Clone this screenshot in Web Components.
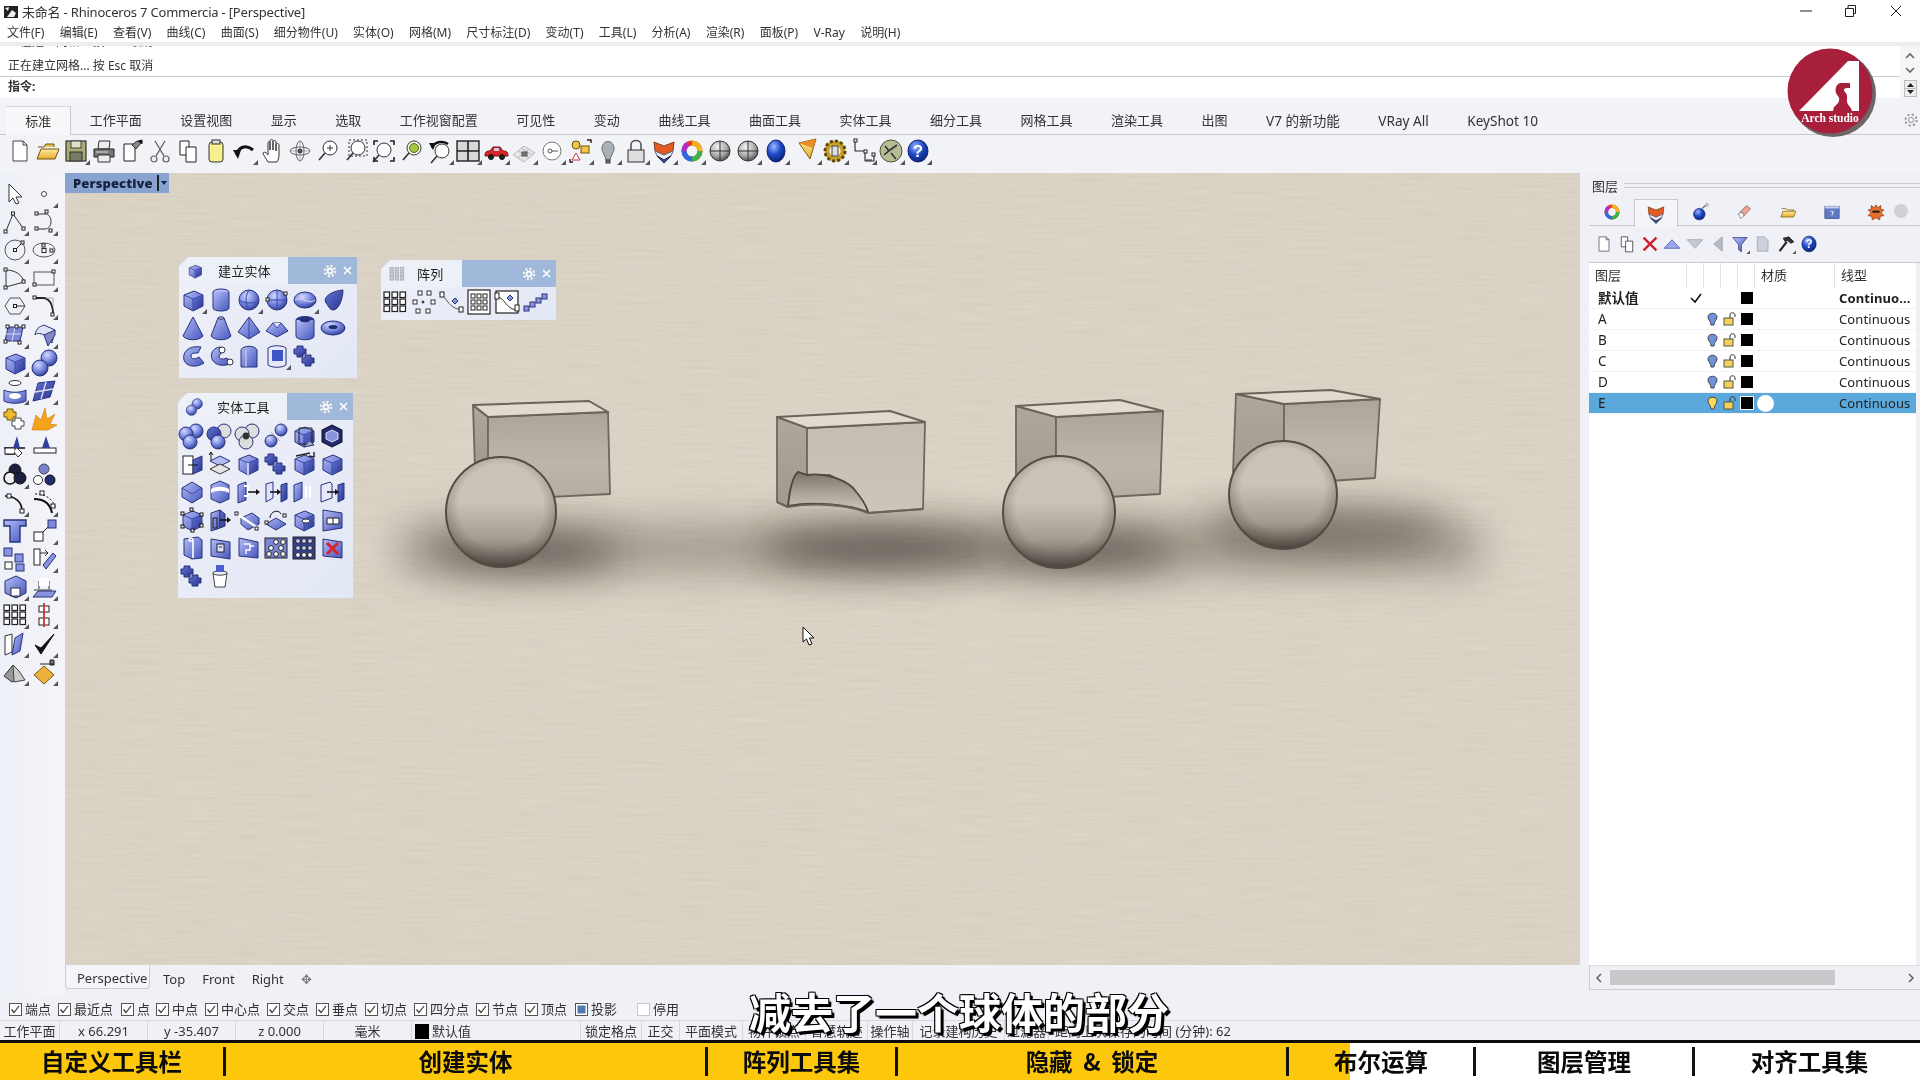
<!DOCTYPE html>
<html lang="zh">
<head>
<meta charset="utf-8">
<title>Rhinoceros 7</title>
<style>
  html, body { margin: 0; padding: 0; background: #f0f1f6; }
  body { font-family: "Noto Sans", "Noto Sans CJK SC", sans-serif; overflow: hidden; }
</style>
</head>
<body>
<rh-app></rh-app>
<script>
// shared gradients for the little toolbar icons
const DEFS = `<defs>
<linearGradient id="b" x1="0" y1="0" x2="1" y2="1"><stop offset="0" stop-color="#b4bdf7"/><stop offset="1" stop-color="#4656bd"/></linearGradient>
<linearGradient id="d" x1="0" y1="0" x2="1" y2="1"><stop offset="0" stop-color="#6675d6"/><stop offset="1" stop-color="#27338c"/></linearGradient>
<radialGradient id="s" cx=".38" cy=".3" r=".75"><stop offset="0" stop-color="#d5daff"/><stop offset=".55" stop-color="#7585de"/><stop offset="1" stop-color="#2c388f"/></radialGradient>
<radialGradient id="g" cx=".4" cy=".3" r=".75"><stop offset="0" stop-color="#f4f4f4"/><stop offset=".6" stop-color="#a9a9a9"/><stop offset="1" stop-color="#444"/></radialGradient>
<radialGradient id="u" cx=".38" cy=".3" r=".75"><stop offset="0" stop-color="#9db8ff"/><stop offset=".5" stop-color="#1f49c8"/><stop offset="1" stop-color="#0c1f6e"/></radialGradient>
<linearGradient id="y" x1="0" y1="0" x2="0" y2="1"><stop offset="0" stop-color="#ffe9a0"/><stop offset="1" stop-color="#e8ad2c"/></linearGradient>
</defs>`;

const P = (d, fill = "none", stroke = "#333", w = 1) => `<path d="${d}" fill="${fill}" stroke="${stroke}" stroke-width="${w}"/>`;
const C = (x, y, r, fill = "none", stroke = "#333", w = 1) => `<circle cx="${x}" cy="${y}" r="${r}" fill="${fill}" stroke="${stroke}" stroke-width="${w}"/>`;
const E = (x, y, rx, ry, fill = "none", stroke = "#333", w = 1) => `<ellipse cx="${x}" cy="${y}" rx="${rx}" ry="${ry}" fill="${fill}" stroke="${stroke}" stroke-width="${w}"/>`;
const R = (x, y, w, h, fill = "#fff", stroke = "#222", sw = 1) => `<rect x="${x}" y="${y}" width="${w}" height="${h}" fill="${fill}" stroke="${stroke}" stroke-width="${sw}"/>`;
const NAVY = "#27327a";

const cube = P("M5 9L15 5L24 9V20L14 25L5 20Z", "url(#b)", NAVY) + P("M14 13L24 9V20L14 25Z", "url(#d)", "none", 0) + P("M5 9L14 13L24 9M14 13V25", "none", "#3b49a8");
const sph = (x = 14, y = 14, r = 10) => C(x, y, r, "url(#s)", NAVY);
const mag = (x = 16, y = 11) => C(x, y, 7, "#fff", "#333") + P(`M${x - 5} ${y + 5}L${x - 11} ${y + 12}`, "none", "#333", 1.6);
const puzzle = P("M6 4h6v3h3v5h-3v3h-6v-3h-3v-5h3z", "url(#d)", NAVY) + P("M14 13h6v3h3v5h-3v3h-6v-3h-3v-5h3z", "url(#d)", NAVY);
const bools = a => C(18, 9, 7, a[0], NAVY) + C(8, 12, 7, a[1], NAVY) + C(12, 20, 7, a[2], NAVY);
const arrow = (x, y, l = 10) => P(`M${x} ${y}h${l}`, "none", "#111", 1.3) + P(`M${x + l} ${y - 3}l4 3l-4 3z`, "#111", "none", 0);

const ICONS = {
  // top toolbar
  new: P("M7 4H17L21 8V24H7Z", "#fff", "#444") + P("M17 4V8H21", "none", "#444"),
  open: P("M4 10h6l2-3h8v3", "#e9c24e", "#6b5410") + P("M3 22L7 12H25L21 22Z", "url(#y)", "#6b5410"),
  save: R(4, 4, 20, 20, "#a9ad72", "#333", 1.2) + R(9, 4, 10, 7, "#dfe0c8", "#444") + R(8, 15, 12, 9, "#777b66", "#333"),
  print: P("M9 4H20L19 12H8Z", "#eee", "#333") + P("M4 12H24V20H4Z", "#777", "#222") + P("M8 18H20V25H8Z", "#eee", "#333") + P("M6 15h12", "none", "#ddd"),
  docs: P("M6 7H17V24H6Z", "#fff", "#222") + P("M14 8l5-4l4 2l-5 6z", "#888", "#333") + P("M20 4l4 -1v4", "#111", "#111"),
  cut: P("M9 4L18 19M19 4L10 19", "none", "#555", 1.2) + C(8, 22, 3, "#eee", "#666", 1.2) + C(20, 22, 3, "#eee", "#666", 1.2),
  copy: P("M6 4H15V18H6Z", "#fff", "#222") + P("M12 10H22V25H12Z", "#fff", "#222"),
  paste: `<rect x="7" y="5" width="14" height="20" rx="3" fill="#f6f08e" stroke="#333"/>` + R(10, 3, 8, 4, "#ddd", "#333"),
  undo: P("M7 18C8 10 16 7 23 13", "none", "#111", 3) + P("M3 13L11 13L8 22Z", "#111", "none", 0),
  hand: P("M10 25C8 21 5 18 5 16C6 14 9 16 10 18V6C10 4 12 4 12 6V13V4C12 2 15 2 15 4V13V5C15 3 18 3 18 5V14V8C18 6 21 6 21 8V18C21 21 20 23 19 25Z", "#fff", "#333"),
  rot: E(14, 14, 10, 4, "none", "#666") + E(14, 14, 4, 10, "none", "#666") + C(14, 14, 2, "#222", "#222") + P("M4 14h20M14 4v20", "none", "#888", .6),
  zoomi: mag() + P("M13 11h6M16 8v6", "none", "#333"),
  zoomw: mag() + `<rect x="7" y="3" width="18" height="16" fill="none" stroke="#333" stroke-dasharray="2 2"/>`,
  zoome: mag(14, 13) + P("M4 8V4H8M20 4H24V8M4 20V24H8M20 24H24V20", "none", "#222", 1.6),
  zooms: mag() + C(16, 11, 4.5, "#a8c63f", "#4d6a10"),
  zoomu: mag(16, 14) + P("M6 11C8 5 16 3 22 7", "none", "#111", 2.4) + P("M3 6L10 6L7 13Z", "#111", "none", 0),
  grid4: R(3, 4, 22, 20, "#d8d8d8", "#222", 1.4) + P("M14 4V24M3 14H25", "none", "#222", 1.6),
  car: P("M3 18C3 14 6 14 8 14L11 10H18L21 14C25 14 26 15 26 19H3Z", "#d7252a", "#801014") + C(9, 20, 2.5, "#222", "#111") + C(20, 20, 2.5, "#222", "#111") + R(12, 11, 5, 3, "#ccd", "none", 0),
  ghost: P("M3 18L14 9L25 16L14 25Z", "#e6e6e6", "#bbb") + P("M8 14L19 21M11 11L22 18M8 21L19 12", "none", "#bbb") + R(12, 15, 5, 4, "#777", "#555"),
  circ: C(14, 14, 9, "#fff", "#777") + C(12, 14, 2, "#fff", "#555") + P("M14 14h6", "none", "#555"),
  osnap: C(10, 8, 4, "#f4c542", "#6b5410") + R(15, 9, 8, 7, "#f4c542", "#6b5410") + P("M10 16L14 23H6Z", "#fff", "#c33") + P("M4 22V25H7M21 3H25V6", "none", "#222", 1.4),
  bulb: P("M8 12C8 2 20 2 20 12C20 16 17 17 16 23H12C11 17 8 16 8 12Z", "#aab0b8", "#666") + R(12, 23, 4, 3, "#666", "#444"),
  lock: P("M9 13V8C9 2 19 2 19 8V13", "none", "#555", 1.6) + R(6, 13, 16, 12, "#ddd", "#333"),
  shield: P("M4 5L14 9L24 5L23 14L14 18L5 14Z", "#e65a24", "#742") + P("M5 14L14 18L23 14L21 19L14 23L7 19Z", "#e8e8ef", "#668") + P("M7 19L14 23L21 19L14 26Z", "#3a58b0", "#224"),
  wheel: `<circle cx="14" cy="14" r="8" fill="none" stroke="#e33" stroke-width="5"/><path d="M14 6A8 8 0 0 1 22 14" fill="none" stroke="#f5b21b" stroke-width="5"/><path d="M22 14A8 8 0 0 1 14 22" fill="none" stroke="#3ab34a" stroke-width="5"/><path d="M14 22A8 8 0 0 1 6 14" fill="none" stroke="#2e6be0" stroke-width="5"/><path d="M6 14A8 8 0 0 1 10 7" fill="none" stroke="#b02ec0" stroke-width="5"/>`,
  sphg: C(14, 14, 10, "url(#g)", "#333") + P("M4 14H24M14 4V24", "none", "#333"),
  blue: E(14, 14, 9, 11, "url(#u)", "#12246e"),
  cone: P("M5 6L22 2L16 22Z", "url(#y)", "#7a5a10") + P("M5 6L22 2L19 11Z", "#f08a24", "none", 0),
  gear: `<circle cx="14" cy="14" r="8" fill="none" stroke="#c9a227" stroke-width="5"/><circle cx="14" cy="14" r="10" fill="none" stroke="#5c4a12" stroke-width="3" stroke-dasharray="3 2.2"/>` + R(11, 9, 6, 10, "#ddd", "#444"),
  dim: P("M6 4V14M6 14H16V24M16 24H25M25 18V24", "none", "#222", 1.1) + R(5, 2, 3, 3) + R(15, 13, 3, 3) + R(23, 16, 3, 3) + P("M17 23h6", "none", "#222"),
  globe: C(14, 14, 11, "#b6bd94", "#4c5233") + P("M7 18L13 13L20 8M12 14L8 9M14 16L19 22", "none", "#333", 1.6),
  help: E(14, 14, 10, 11, "url(#u)", "#12246e") + `<text x="14" y="20" font-family="Liberation Sans" font-size="17" font-weight="700" fill="#fff" text-anchor="middle">?</text>`,
  // left toolbar
  select: P("M8 4V22L12 18L15 24L18 23L15 17H21Z", "#fff", "#333"),
  point: C(14, 14, 2.5, "#fff", "#444"),
  polyl: P("M5 23L12 6L22 20", "none", "#333") + R(3, 22, 3, 3) + R(10.5, 4, 3, 3) + R(21, 19, 3, 3),
  curve: P("M7 6H15C23 6 23 21 15 21H7", "none", "#333") + R(5, 4, 3, 3) + R(15, 2, 3, 3) + R(5, 19, 3, 3) + R(19, 21, 3, 3),
  circle: C(14, 14, 10, "none", "#555") + P("M14 14L21 7", "none", "#333") + R(12.5, 12.5, 3, 3) + R(20, 5, 3, 3),
  ellipse: E(14, 14, 11, 7, "none", "#555") + R(12, 8, 3, 3) + R(12, 12.5, 4, 4) + R(20, 13, 3, 3),
  arc: P("M5 23V6C15 6 22 12 23 18L5 23", "none", "#333") + R(3, 4, 3, 3) + R(21, 16, 3, 3) + R(3, 22, 3, 3),
  rect: R(4, 8, 20, 13, "none", "#555") + R(3, 19, 3, 3) + R(22, 6, 3, 3),
  poly: P("M4 14L9 6H19L24 14L19 22H9Z", "none", "#555") + P("M14 14H24", "none", "#333") + R(12.5, 12.5, 3, 3),
  fillet: P("M4 6H13C19 6 23 12 23 22", "none", "#222", 1.8) + R(3, 4, 3, 3) + R(21, 21, 3, 3) + P("M16 6H23V14", "none", "#aaa"),
  srfp: P("M7 6L22 6L19 20L4 20Z", "#7c86d8", NAVY) + P("M14 6L11 20M5 13H20", "none", "#dde") + R(5, 4, 3, 3) + R(14, 4, 3, 3) + R(21, 4, 3, 3) + R(3, 19, 3, 3) + R(17, 20, 3, 3),
  srfe: P("M5 14C6 6 12 5 14 4L25 9L22 22L14 14C10 12 6 12 5 14Z", "#dfe2f5", NAVY) + P("M14 14L25 9V14L18 25Z", "#8088c4", NAVY),
  cube,
  spheres: C(19, 9, 8, "url(#s)", NAVY) + C(10, 19, 8, "url(#s)", NAVY),
  meshc: E(14, 6, 6, 2.5, "#fff", "#333") + P("M3 13C8 16 20 16 25 13V24C20 27 8 27 3 24Z", "url(#b)", NAVY) + E(14, 19, 6, 3, "#fff", "none", 0),
  grid: P("M8 6L25 4L20 20L3 24Z", "url(#d)", NAVY) + P("M16 5L11 22M5 15L23 12", "none", "#dde", 1.4),
  gold: P("M6 4h6v3h3v5h-3v3h-6v-3h-3v-5h3z", "#f0b92e", "#6b5410") + P("M14 13h6v3h3v5h-3v3h-6v-3h-3v-5h3z", "#fff", "#444"),
  boom: P("M2 25L6 10L11 15L15 3L17 14L25 9L20 19L27 20L18 25Z", "#f4a41c", "#c77a08", .6),
  trim: P("M3 15H24M5 15V21H13V15", "none", "#111", 1.4) + R(4, 15, 10, 6) + P("M16 3L19 15H12Z", "#33409a", "none", 0) + P("M13 19l4 5l4-4l-5-5", "#fff", "#333"),
  split: R(4, 15, 22, 5) + P("M16 3L20 15H12Z", "#33409a", "none", 0),
  group: C(14, 9, 6, "#1b2040", "#111") + C(9, 17, 6, "#eee", "#111", 1.6) + C(19, 17, 6, "#1b2040", "#111"),
  ungroup: C(14, 8, 5, "#7a82c9", "#445") + C(8, 19, 4.5, "#fff", "#333") + C(20, 19, 5, "#232a70", "#111"),
  fc: P("M4 7C14 7 21 13 21 22", "none", "#111", 1.6) + R(6, 5, 4, 4) + R(19, 20, 4, 4),
  fc2: P("M4 10C14 10 20 14 22 24", "none", "#111", 2) + `<path d="M5 5C16 5 23 10 26 20" fill="none" stroke="#111" stroke-dasharray="2 2"/>` + R(10, 2, 4, 4) + R(21, 15, 4, 4),
  textT: P("M3 3H25V9H19V25H9V9H3Z", "url(#b)", NAVY, 1.4),
  scale: R(4, 15, 9, 9) + P("M13 15L19 9", "none", "#222") + R(18, 3, 8, 8, "#7f88d8", NAVY),
  arr4: R(3, 3, 8, 8, "#8a93dd", NAVY) + R(14, 9, 8, 8, "#8a93dd", NAVY) + R(4, 17, 7, 7) + R(15, 19, 8, 7, "#8a93dd", NAVY),
  rotc: R(4, 4, 6, 16) + P("M10 8H18M15 5l3 3l-3 3", "none", "#333") + P("M13 20L23 8L26 11L16 24Z", "#8a93dd", NAVY),
  block: P("M4 8L15 3L25 8V20L15 25L4 20Z", "url(#b)", NAVY) + R(10, 15, 9, 8, "#fff", "#333"),
  planes: P("M3 24L8 18H26L22 24Z", "#8a93dd", NAVY) + P("M4 17H22M9 8V16M19 8V16", "none", "#333") + `<rect x="9" y="5" width="10" height="8" fill="#fff"/>`,
  grid9: [5, 12, 19].map(y => [3, 11, 19].map(x => R(x, y - 1, 5.5, 5.5, "#fff", "#222", 1.2)).join("")).join(""),
  grid9g: [5, 12, 19].map(y => [3, 11, 19].map(x => R(x, y - 1, 5.5, 5.5, "#c9cbd4", "#9ea0ac", 1)).join("")).join(""),
  align: R(9, 5, 10, 6) + R(9, 17, 10, 7) + P("M14 2V26", "none", "#c33", 1.8),
  mirror: P("M4 6L11 4V22L4 25Z", "#fff", "#333") + P("M14 8L22 3L19 21L11 25Z", "url(#b)", NAVY),
  check: P("M5 15L11 24L24 4L11 18Z", "#111", "#111"),
  solid: P("M3 18L12 7L18 13V21L11 24Z", "#999", "#333") + P("M12 7L18 13L24 22L13 24Z", "#ccc", "#444"),
  pyro: P("M4 17L14 8L24 17L14 26Z", "#eeb23c", "#7a5a10") + P("M10 6H24M20 2h4v5h-4z", "#777", "#222"),
  // solid panels
  cyl: E(14, 6, 8, 3, "#b4bdf7", NAVY) + P("M6 6V22C6 26 22 26 22 22V6", "url(#b)", NAVY),
  sphp: sph() + P("M4 14H24M14 4V24", "none", "#3b49a8") + R(3, 12, 3, 3) + R(21, 6, 3, 3),
  sphc: sph() + P("M4 14C8 18 20 18 24 14M14 4C10 10 10 18 14 24", "none", "#3b49a8"),
  ell: E(14, 14, 11, 8, "url(#s)", NAVY) + P("M4 14C10 9 18 20 24 14", "none", "#dde"),
  para: P("M8 18C2 12 12 5 24 4C24 12 20 24 14 24C11 24 9 20 8 18Z", "url(#d)", NAVY),
  cone3: P("M14 3L24 22C20 27 8 27 4 22Z", "url(#b)", NAVY),
  tcone: P("M11 4H17L24 22C20 27 8 27 4 22Z", "url(#b)", NAVY) + E(14, 4, 3, 1.2, "#ccd", NAVY),
  pyr: P("M14 3L25 18L14 25L3 18Z", "url(#b)", NAVY) + P("M14 3V25", "none", "#3b49a8"),
  trunc: P("M10 9H18L25 17L14 23L3 17Z", "url(#b)", NAVY) + P("M10 9L14 14L18 9", "#dfe2ff", "#3b49a8"),
  tube: E(14, 6, 9, 3.5, "#2c388f", NAVY) + P("M5 6V22C5 27 23 27 23 22V6", "url(#b)", NAVY) + E(14, 6, 5, 1.8, "#232a70", NAVY),
  torus: E(14, 14, 12, 7, "url(#s)", NAVY) + E(14, 13, 4.5, 2, "#232a70", "none", 0),
  pipe: P("M22 5C10 3 3 10 5 18C7 25 18 26 25 21L20 15C15 18 12 17 12 14C12 11 15 11 19 11Z", "url(#b)", NAVY),
  pipe2: P("M14 5C6 5 3 12 5 17C8 24 18 25 24 21L20 16C15 18 12 17 12 14L14 11Z", "url(#b)", NAVY) + C(15, 8, 3, "#fff", "#333") + C(23, 20, 3, "#fff", "#333"),
  ext: P("M6 8C8 3 20 3 22 8V25H6Z", "url(#b)", NAVY) + P("M11 8V25", "none", "#dde"),
  ext2: P("M5 6C9 3 19 3 23 6V23C19 26 9 26 5 23Z", "#e7e9fb", NAVY) + R(9, 8, 11, 11, "#3e55c8", "none", 0),
  puzzle,
  arrc: [[6, 14], [11, 5], [20, 5], [24, 14], [19, 23], [9, 23]].map(p => R(p[0] - 2, p[1] - 2, 4, 4, "#fff", "#333", 1)).join("") + C(14, 14, 1, "#333", "#333"),
  arrv: P("M4 8C10 8 10 20 25 22", "none", "#555") + R(3, 4, 4, 5) + P("M15 13l3-3l3 3l-3 3z", "#8a93dd", NAVY) + R(22, 19, 4, 5),
  arrb: R(3, 2, 22, 24, "#fff", "#222", 1.2) + [7, 13, 19].map(y => [6, 12, 18].map(x => R(x, y - 1, 4, 4, "#fff", "#222")).join("")).join(""),
  arrs: R(3, 3, 22, 22, "#fff", "#222", 1.2) + P("M4 9C12 9 12 21 24 22", "none", "#333") + R(2, 5, 4, 6) + P("M14 10l3-3l3 3l-3 3z", "#8a93dd", NAVY) + R(22, 17, 4, 6),
  arrd: R(3, 18, 5, 5, "#8a93dd", NAVY) + R(9, 14, 5, 5, "#8a93dd", NAVY) + R(15, 10, 5, 5, "#8a93dd", NAVY) + R(21, 6, 5, 5, "#8a93dd", NAVY),
  b1: bools(["url(#s)", "url(#s)", "url(#s)"]),
  b2: bools(["#ddd", "url(#d)", "url(#s)"]),
  b3: bools(["#ddd", "#ddd", "#ddd"]) + C(12, 14, 3.4, "#333", "none"),
  b4: C(19, 8, 6, "url(#s)", NAVY) + C(9, 19, 6, "url(#s)", NAVY) + P("M9 10L18 19", "none", "#aab", 1),
  c5: cube + P("M9 6L22 6V22L9 22Z", "none", "#222") + P("M14 25L24 23L20 19", "#aab", NAVY),
  c6: P("M14 3L24 8V20L14 25L4 20V8Z", "#1f2a70", "#111") + P("M14 8L20 11V17L14 20L8 17V11Z", "#8a93dd", "#dde"),
  s1: R(5, 6, 10, 18, "#fff", "#222") + P("M15 10L24 6V20L15 24Z", "url(#d)", NAVY) + P("M20 15H10", "none", "#111"),
  s2: P("M4 11L14 6L24 11L14 16Z", "#b5bdf0", NAVY) + P("M4 19L14 14L24 19L14 24Z", "#e5e5e5", "#333") + P("M5 3V10M3 5l2-3l2 3", "none", "#111"),
  s3: cube + P("M14 13V25", "none", "#fff", 1.4),
  s5: cube + P("M6 6L20 3M19 6l5 1v-5", "none", "#222", 1.4),
  s7: P("M14 4L24 10V19L14 25L4 19V10Z", "url(#b)", NAVY) + P("M4 10L14 16L24 10", "none", "#3b49a8"),
  s8: P("M5 7L14 3L23 7V21L14 25L5 21Z", "url(#b)", NAVY) + P("M5 11C10 8 18 8 23 11V15C18 12 10 12 5 15Z", "#fff", "none", 0),
  s9: P("M4 7L12 4V22L4 25Z", "url(#b)", NAVY) + P("M10 8H14V18H10", "none", "#fff", 2) + arrow(14, 14, 8),
  s10: P("M4 6L11 4V20L4 24Z", "#dfe2fb", NAVY) + P("M19 7L25 5V21L19 24Z", "url(#d)", NAVY) + arrow(8, 14, 7),
  s11: P("M4 7L12 4V20L4 24Z", "url(#b)", NAVY) + P("M16 8V20M20 8V20", "none", "#fff", 1.8),
  s12: P("M3 7L12 4L14 6V20L3 24Z", "#e7e9fb", NAVY) + P("M20 7L26 5V21L20 24Z", "url(#d)", NAVY) + arrow(9, 14, 8),
  s13: cube + [[4, 7], [13, 3], [23, 8], [4, 20], [14, 24], [23, 19]].map(p => R(p[0] - 1, p[1] - 1, 3, 3, "#fff", "#111")).join(""),
  s14: P("M5 7L14 4V22L5 25Z", "url(#b)", NAVY) + P("M14 4L19 8V20L14 22Z", "url(#d)", NAVY) + arrow(14, 14, 7) + R(7, 12, 4, 10, "none", "#222"),
  s15: P("M7 12L18 7L25 12V18L14 24L7 18Z", "url(#b)", NAVY) + P("M3 8L24 22", "none", "#fff", 2.4) + R(1, 6, 3, 3) + R(21, 21, 3, 3),
  s16: P("M4 18L14 12L24 18L14 24Z", "url(#b)", NAVY) + P("M8 12C8 5 17 3 19 8", "none", "#111") + R(3, 15, 3, 3) + R(21, 8, 3, 3),
  s17: cube + E(16, 15, 4, 2, "#fff", "#333"),
  s18: P("M5 4L24 7V22L5 25Z", "url(#b)", NAVY) + P("M9 12H21V18H9Z", "#fff", "#222") + P("M15 12V18", "none", "#222"),
  s19: P("M6 5L20 3L24 6V24L14 25L6 21Z", "url(#b)", NAVY) + P("M11 7H15V24M11 7C11 3 15 3 15 7", "none", "#fff", 1.6),
  s20: P("M5 5L24 8V25L5 22Z", "url(#b)", NAVY) + R(11, 10, 7, 8, "#dfe2fb", "#222") + P("M13 13h3", "none", "#222"),
  s21: P("M5 4L24 8V24L5 22Z", "url(#b)", NAVY) + P("M10 10h6v6h-4v4M16 12h4", "none", "#fff", 1.4),
  s22: R(3, 4, 22, 20, "#7c86d8", "#222") + [[14, 8], [21, 8], [9, 14], [19, 14], [14, 20], [21, 20], [7, 20]].map(p => C(p[0], p[1], 2.4, "#fff", "#222")).join(""),
  s23: R(3, 3, 22, 22, "#34408f", "#222") + [7, 14, 21].map(y => [8, 14, 20].map(x => C(x, y, 2.4, y > 20 ? "#fff" : "#c8ccf0", "#222")).join("")).join(""),
  s24: P("M5 5L24 8V24L5 22Z", "url(#b)", NAVY) + P("M9 9L20 20M20 9L9 20", "none", "#d8222c", 3),
  cup: P("M7 11H21L19 25H9Z", "#fff", "#444") + E(14, 11, 7, 2.2, "#eee", "#444") + R(10, 3, 8, 7, "#4b5fd0", "none", 0),
  // layers panel
  bomb: C(13, 17, 8, "url(#u)", "#12246e") + P("M17 9L23 4", "none", "#777", 2) + C(24, 4, 2, "#ddd", "#999"),
  brush: P("M8 14L18 4L24 9L14 20Z", "#f0a58c", "#555") + P("M5 17L11 14L14 20L9 24Z", "#fff", "#555"),
  folder: P("M5 9H11L13 11H22V13", "#f6d765", "#7a5a10") + P("M4 21L7 13H25L22 21Z", "url(#y)", "#7a5a10"),
  tex: R(4, 6, 20, 17, "#5d79c8", "#3a4a80") + R(4, 6, 20, 3, "#c8d2f0", "none", 0) + P("M11 14c3-3 5 0 3 3M16 12l-2 7", "none", "#fff"),
  sun: P("M14 4L16 8L21 5L20 10L25 11L21 15L25 19L20 20L19 25L14 22L9 25L8 20L3 19L7 15L3 11L8 10L7 5L12 8Z", "#e8702a", "#8b2a10") + R(9, 12, 10, 3, "#222", "none", 0),
  redx: P("M5 5L23 23M23 5L5 23", "none", "#c8232c", 3.4),
  triu: P("M14 8L25 20H3Z", "#9da6ea", "#3a4aa8"),
  trid: P("M3 8H25L14 20Z", "#c7c9d2", "#9a9caa"),
  tril: P("M20 4V24L8 14Z", "#b9bbc4", "#9a9caa"),
  filt: P("M4 5H24L16 15V25L12 22V15Z", "url(#b)", NAVY),
  page: P("M6 4H16L21 9V24H6Z", "#ccd0dc", "#9a9caa"),
  hammer: P("M5 24L15 11", "none", "#222", 3) + P("M10 6L18 4L25 11L21 13L16 9L13 11Z", "#333", "#111"),
  empty: "",
};

class ToolIcon extends HTMLElement {
  connectedCallback() {
    const raw = this.getAttribute("name") || "empty";
    const more = raw.endsWith("+");
    const name = more ? raw.slice(0, -1) : raw;
    const size = this.getAttribute("size") || 28;
    const shadow = this.attachShadow({ mode: "open" });
    shadow.innerHTML = `<style>:host{display:block;width:${size}px;height:${size}px}svg{display:block}</style>
      <svg width="${size}" height="${size}" viewBox="0 0 28 28">${DEFS}${ICONS[name] || ""}${more ? '<path d="M28 23V28H23Z" fill="#555"/>' : ""}</svg>`;
  }
}
customElements.define("tool-icon", ToolIcon);

// grid of icons, cols/pitch come from attributes
class ToolStrip extends HTMLElement {
  connectedCallback() {
    const list = this.getAttribute("icons").trim().split(/\s+/);
    const cols = this.getAttribute("cols") || list.length;
    const px = this.getAttribute("px") || 28;
    const py = this.getAttribute("py") || 28;
    const size = this.getAttribute("size") || 28;
    const shadow = this.attachShadow({ mode: "open" });
    shadow.innerHTML = `<style>
        :host{display:grid;grid-template-columns:repeat(${cols},${px}px);grid-auto-rows:${py}px;justify-items:center;align-items:center}
      </style>` + list.map(n => `<tool-icon name="${n}" size="${size}"></tool-icon>`).join("");
  }
}
customElements.define("tool-strip", ToolStrip);

class RhTitlebar extends HTMLElement {
  connectedCallback() {
    this.attachShadow({ mode: "open" }).innerHTML = `<style>
      :host{display:flex;align-items:center;height:22px;background:#fff;font-size:13px;color:#333;line-height:22px;padding:2px 0 0 3px;box-sizing:border-box}
      svg{flex:none}
      .t{margin-left:3px;white-space:nowrap;letter-spacing:-.2px}
      .win{margin-left:auto;display:flex}
      .win span{display:block;width:44px;height:20px}
      .win svg{display:block;margin:0 auto}
    </style>
    <svg width="16" height="16" viewBox="0 0 16 16"><path d="M1 2H15V14H1Z" fill="#222"/><path d="M4 13L9 6L13 9L11 13ZM2 4L6 3L5 7Z" fill="#eee"/></svg>
    <span class="t">未命名 - Rhinoceros 7 Commercia - [Perspective]</span>
    <div class="win">
      <span><svg width="14" height="18" viewBox="0 0 14 18"><path d="M1 9H13" stroke="#222"/></svg></span>
      <span><svg width="14" height="18" viewBox="0 0 14 18"><path d="M2.5 6.5H10.5V14.5H2.5ZM5 6V3.5H12.5V11.5H11" fill="none" stroke="#222"/></svg></span>
      <span style="width:48px"><svg width="14" height="18" viewBox="0 0 14 18"><path d="M2 4L12 14M12 4L2 14" stroke="#222"/></svg></span>
    </div>`;
  }
}
customElements.define("rh-titlebar", RhTitlebar);

class RhMenubar extends HTMLElement {
  connectedCallback() {
    const items = ["文件(F)", "编辑(E)", "查看(V)", "曲线(C)", "曲面(S)", "细分物件(U)", "实体(O)", "网格(M)", "尺寸标注(D)", "变动(T)", "工具(L)", "分析(A)", "渲染(R)", "面板(P)", "V-Ray", "说明(H)"];
    this.attachShadow({ mode: "open" }).innerHTML = `<style>
      :host{display:flex;gap:15.3px;height:20px;background:#fff;padding-left:7px;font-size:12px;line-height:22px;color:#333;box-sizing:border-box;white-space:nowrap}
    </style>` + items.map(i => `<span>${i}</span>`).join("");
  }
}
customElements.define("rh-menubar", RhMenubar);

class RhCommand extends HTMLElement {
  connectedCallback() {
    this.attachShadow({ mode: "open" }).innerHTML = `<style>
      :host{display:block;height:56px;background:#fff;border-top:4px solid #eceded;box-sizing:border-box;position:relative;font-size:12px;color:#333}
      .hist{height:31px;overflow:hidden;display:flex;flex-direction:column;justify-content:flex-end;padding-left:8px;border-bottom:1px solid #c9c9c9;box-sizing:border-box}
      .hist div{line-height:21px;flex:none}
      .hist div:first-child{margin-bottom:3px}
      .prompt{height:21px;line-height:20px;padding-left:8px;font-weight:700;box-sizing:border-box}
      .side{position:absolute;right:0;top:0;width:20px;height:52px;background:#f6f6f8}
      .side svg{display:block;margin:0 auto}
      .spin{width:13px;height:17px;border:1px solid #bbb;margin:3px auto 0;background:#eee;box-sizing:border-box}
    </style>
    <div class="hist"><div>正在建立网格... 按 Esc 取消</div><div>正在建立网格... 按 Esc 取消</div></div>
    <div class="prompt">指令:</div>
    <div class="side">
      <svg width="12" height="14" viewBox="0 0 12 14" style="margin-top:3px"><path d="M2 9L6 5L10 9" fill="none" stroke="#666" stroke-width="1.6"/></svg>
      <svg width="12" height="14" viewBox="0 0 12 14"><path d="M2 5L6 9L10 5" fill="none" stroke="#666" stroke-width="1.6"/></svg>
      <div class="spin"><svg width="11" height="15" viewBox="0 0 11 15"><path d="M2 6L5.5 2L9 6ZM2 9H9L5.5 13Z" fill="#222"/><path d="M0 7.5H11" stroke="#bbb"/></svg></div>
    </div>`;
  }
}
customElements.define("rh-command", RhCommand);

class RhTabs extends HTMLElement {
  connectedCallback() {
    const items = ["标准", "工作平面", "设置视图", "显示", "选取", "工作视窗配置", "可见性", "变动", "曲线工具", "曲面工具", "实体工具", "细分工具", "网格工具", "渲染工具", "出图", "V7 的新功能", "VRay All", "KeyShot 10"];
    this.attachShadow({ mode: "open" }).innerHTML = `<style>
      :host{display:flex;align-items:flex-end;height:37px;background:#f2f3f7;border-bottom:1px solid #c8c9cc;padding-left:6px;box-sizing:border-box;font-size:13px;color:#333;white-space:nowrap}
      span{display:block;height:28px;line-height:29px;padding:0 19.25px;box-sizing:border-box}
      .on{background:#f7f8fa;border-top:1px solid #d8d9dc;border-right:1px solid #c8c9cc;height:29px;margin-bottom:-1px;padding-right:18.25px}
      .big{font-size:13.6px}
      svg{margin:0 1px 6px auto}
    </style>` + items.map((t, i) => `<span class="${i ? (i > 14 ? "big" : "") : "on"}">${t}</span>`).join("") +
    `<svg width="16" height="16" viewBox="0 0 16 16"><circle cx="8" cy="8" r="2.6" fill="none" stroke="#999"/><circle cx="8" cy="8" r="5.6" fill="none" stroke="#999" stroke-width="2" stroke-dasharray="2.2 2.2"/></svg>`;
  }
}
customElements.define("rh-tabs", RhTabs);

class RhToolbar extends HTMLElement {
  connectedCallback() {
    this.attachShadow({ mode: "open" }).innerHTML = `<style>
      :host{display:flex;height:38px;background:#f2f3f7;padding:1px 0 0 6px;box-sizing:border-box}
      tool-strip + tool-strip{margin-left:4px}
    </style>
    <tool-strip py="30" px="28" icons="new open save+ print docs cut copy paste undo+ hand rot zoomi zoomw zoome zooms zoomu+ grid4+ car+ ghost+ circ+ osnap+ bulb+ lock+ shield+ wheel+ sphg sphg+ blue+"></tool-strip>
    <tool-strip py="30" px="27.6" icons="cone+ gear+ dim+ globe+ help+"></tool-strip>`;
  }
}
customElements.define("rh-toolbar", RhToolbar);

// floating toolbar panel inside the viewport
class FloatBar extends HTMLElement {
  connectedCallback() {
    const a = n => this.getAttribute(n);
    this.attachShadow({ mode: "open" }).innerHTML = `<style>
      :host{position:absolute;left:${a("x")}px;top:${a("y")}px;width:${a("w")}px;display:block;background:linear-gradient(135deg,#eef0f8,#e3e8f6);font-size:13px;color:#222;box-sizing:border-box;clip-path:polygon(9px 0,100% 0,100% 100%,0 100%,0 9px)}
      .head{display:flex;height:27px;background:#a0b9da}
      .tab{width:${a("tab")}px;background:#eef0f8;display:flex;align-items:center;padding-left:7px;gap:5px;box-sizing:border-box;line-height:26px;letter-spacing:.2px}
      .tools{flex:1;display:flex;align-items:center;justify-content:flex-end;gap:6px;padding-right:5px}
      .body{padding:${a("pad") || "2px 0 8px 0"}}
    </style>
    <div class="head">
      <div class="tab"><tool-icon name="${a("icon")}" size="18"></tool-icon><span style="margin-left:${a("tgap") || 5}px">${a("label")}</span></div>
      <div class="tools">
        <svg width="14" height="14" viewBox="0 0 14 14"><circle cx="7" cy="7" r="2.4" fill="none" stroke="#fff" stroke-width="1.6"/><circle cx="7" cy="7" r="5" fill="none" stroke="#f4f4ec" stroke-width="2.6" stroke-dasharray="2 1.9"/></svg>
        <svg width="9" height="9" viewBox="0 0 9 9"><path d="M1 1L8 8M8 1L1 8" stroke="#fff" stroke-width="1.6"/></svg>
      </div>
    </div>
    <div class="body"><slot></slot></div>`;
  }
}
customElements.define("float-bar", FloatBar);

class RhViewport extends HTMLElement {
  connectedCallback() {
    const box = (top, left, right, face = "rightFace") => `
      <polygon points="${left}" fill="url(#leftFace)" stroke="#6f675c" stroke-width="1.8" stroke-linejoin="round"/>
      <polygon points="${right}" fill="url(#${face})" stroke="#6f675c" stroke-width="1.8" stroke-linejoin="round"/>
      <polygon points="${top}" fill="#e0dacf" stroke="#6b6359" stroke-width="2" stroke-linejoin="round"/>`;
    const ball = (x, y, r) => `<circle cx="${x}" cy="${y}" r="${r}" fill="url(#ballV)"/><circle cx="${x}" cy="${y}" r="${r}" fill="url(#ballE)" stroke="#544c43" stroke-width="2"/>`;
    this.attachShadow({ mode: "open" }).innerHTML = `<style>
      :host{display:block;position:relative;width:1515px;height:792px;background:#d9d2c5;overflow:hidden}
      svg.scene{display:block}
      .tag{position:absolute;left:0;top:0;display:flex;height:20px;width:104px;background:#88a3cf;font:700 13px/20px "Noto Sans",sans-serif;color:#16223f}
      .tag b{width:92px;padding-left:8px;box-sizing:border-box;letter-spacing:.1px}
      .tag i{width:12px;border-left:2px solid #1a2230;box-sizing:border-box;position:relative;height:16px;margin-top:2px}
      .tag i::after{content:"";position:absolute;left:2px;top:6px;border:3px solid transparent;border-top:4px solid #16223f}
    </style>
    <svg class="scene" width="1515" height="792" viewBox="65 173 1515 792">
      <defs>
        <filter id="grain" x="0" y="0" width="100%" height="100%">
          <feTurbulence type="fractalNoise" baseFrequency="0.018 0.5" numOctaves="3" seed="4"/>
          <feColorMatrix values="0 0 0 0 .42  0 0 0 0 .38  0 0 0 0 .32  .9 0 0 0 -.3"/>
        </filter>
        <filter id="soft" x="-40%" y="-200%" width="180%" height="500%"><feGaussianBlur stdDeviation="20"/></filter>
        <filter id="soft2" x="-40%" y="-200%" width="180%" height="500%"><feGaussianBlur stdDeviation="19"/></filter>
        <linearGradient id="ballV" x1="0" y1="0" x2="0" y2="1">
          <stop offset="0" stop-color="#c8c2b8"/><stop offset=".4" stop-color="#c9c3ba"/><stop offset=".75" stop-color="#a29b91"/><stop offset="1" stop-color="#5c554d"/>
        </linearGradient>
        <radialGradient id="ballE" cx=".5" cy=".45" r=".55">
          <stop offset=".7" stop-color="#3c352d" stop-opacity="0"/><stop offset=".92" stop-color="#3c352d" stop-opacity=".28"/><stop offset="1" stop-color="#3c352d" stop-opacity=".6"/>
        </radialGradient>
        <linearGradient id="rightFace" x1="0" y1="0" x2="0" y2="1"><stop offset="0" stop-color="#aba499"/><stop offset=".6" stop-color="#bdb6ab"/><stop offset="1" stop-color="#b3aca1"/></linearGradient>
        <linearGradient id="lightFace" x1="0" y1="0" x2="0" y2="1"><stop offset="0" stop-color="#c3bdb2"/><stop offset="1" stop-color="#cbc5ba"/></linearGradient>
        <linearGradient id="leftFace" x1="0" y1="0" x2="0" y2="1"><stop offset="0" stop-color="#aea79c"/><stop offset="1" stop-color="#a0998e"/></linearGradient>
        <linearGradient id="cutFace" x1="0" y1="0" x2="0" y2="1"><stop offset="0" stop-color="#7b746b"/><stop offset=".55" stop-color="#aca59a"/><stop offset="1" stop-color="#cdc7bc"/></linearGradient>
      </defs>
      <rect x="65" y="173" width="1515" height="792" fill="#dbd4c7"/>
      <rect x="65" y="173" width="1515" height="792" filter="url(#grain)" opacity=".28"/>
      <!-- soft shadow on the floor -->
      <rect x="400" y="525" width="1080" height="46" fill="#4a4238" opacity=".4" filter="url(#soft)"/>
      <ellipse cx="525" cy="552" rx="95" ry="20" fill="#2e2820" opacity=".55" filter="url(#soft2)"/>
      <ellipse cx="880" cy="548" rx="120" ry="20" fill="#2e2820" opacity=".6" filter="url(#soft2)"/>
      <ellipse cx="1085" cy="550" rx="95" ry="20" fill="#2e2820" opacity=".55" filter="url(#soft2)"/>
      <ellipse cx="1325" cy="528" rx="125" ry="22" fill="#2e2820" opacity=".48" filter="url(#soft2)"/>
      <!-- model 1 -->
      ${box("473,405 589,401 608,412 488,417", "473,405 488,417 489,470 475,470", "488,417 608,412 610,494 488,500")}
      ${ball(501, 512, 55)}
      <!-- model 2, box with the ball taken out -->
      ${box("777,417 890,411 925,422 807,428", "777,417 807,428 807,475 798,472 790,490 788,507 777,502", "807,428 925,422 923,509 868,513 853,488 830,475 807,475", "lightFace")}
      <path d="M788 506C790 490 792 477 798 472L807 475C825 472 845 480 853 488C860 496 866 504 868 512C850 505 815 501 788 506Z" fill="url(#cutFace)" stroke="#4e473f" stroke-width="1.8"/>
      <path d="M777 502L788 507C815 502 850 505 868 513L923 509" fill="none" stroke="#6b6359" stroke-width="2.2"/>
      <!-- model 3 -->
      ${box("1016,406 1120,400 1163,411 1056,417", "1016,406 1056,417 1056,500 1016,477", "1056,417 1163,411 1160,494 1056,500")}
      ${ball(1059, 512, 56)}
      <!-- model 4 -->
      ${box("1236,394 1331,390 1380,399 1284,404", "1236,394 1284,404 1284,490 1233,472", "1284,404 1380,399 1375,478 1284,484")}
      ${ball(1283, 495, 54)}
      <!-- mouse pointer -->
      <path d="M803 627V642L806.5 639L809 645L812 644L809.5 638H814Z" fill="#fff" stroke="#111" stroke-width="1"/>
    </svg>
    <div class="tag"><b>Perspective</b><i></i></div>
    <slot></slot>`;
  }
}
customElements.define("rh-viewport", RhViewport);

class RhViewtabs extends HTMLElement {
  connectedCallback() {
    this.attachShadow({ mode: "open" }).innerHTML = `<style>
      :host{display:flex;height:30px;background:#f0f1f6;font-size:13px;color:#333;line-height:28px;box-sizing:border-box;white-space:nowrap}
      span{display:block}
      .on{width:85px;height:24px;line-height:27px;padding-left:11px;box-sizing:border-box;border-left:1px solid #ccc;border-right:1px solid #ccc;border-bottom:1px solid #ccc;border-radius:0 0 4px 4px;background:#f4f5f8;margin-right:13px}
      .plus{margin-left:17px;color:#777}
    </style>
    <span class="on">Perspective</span><span>Top</span><span style="margin-left:17px">Front</span><span style="margin-left:17px">Right</span><span class="plus">✥</span>`;
  }
}
customElements.define("rh-viewtabs", RhViewtabs);

class LayerRow extends HTMLElement {
  connectedCallback() {
    const a = n => this.getAttribute(n);
    const bold = this.hasAttribute("bold");
    const on = this.hasAttribute("on");
    const color = on ? "#ffd75a" : "#6f93d6";
    this.attachShadow({ mode: "open" }).innerHTML = `<style>
      :host{display:grid;grid-template-columns:9px 89px 17px 17px 17px 17px 1fr 77px;height:21px;line-height:21px;font-size:13.5px;color:#222;border-bottom:1px solid #f3f3f3;box-sizing:border-box;background:${on ? "#5aa8dc" : "#fff"};font-weight:${bold ? 700 : 400};white-space:nowrap;align-items:center}
      div{display:flex;justify-content:center;align-items:center;height:20px}
      .n{justify-content:flex-start}
      .l{justify-content:flex-start;font-size:13px;letter-spacing:.1px}
      .sq{width:12px;height:12px;background:#000;${on ? "outline:1px solid #fff;" : ""}}
      .dot{width:17px;height:17px;border-radius:50%;background:#fff;margin-left:1px}
    </style>
    <span></span><div class="n">${a("name")}</div>
    <div>${bold ? '<svg width="14" height="14" viewBox="0 0 14 14"><path d="M2 7L6 11L12 3" fill="none" stroke="#111" stroke-width="1.6"/></svg>' : ""}</div>
    <div>${bold ? "" : `<svg width="11" height="15" viewBox="0 0 11 15"><path d="M1 5C1 0 10 0 10 5C10 8 7 9 7 13H4C4 9 1 8 1 5Z" fill="${color}" stroke="#445"/></svg>`}</div>
    <div>${bold ? "" : '<svg width="13" height="14" viewBox="0 0 13 14"><path d="M7 6V3C7 0 12 0 12 3V5" fill="none" stroke="#333"/><rect x="1" y="6" width="9" height="7" fill="#f4d25a" stroke="#554"/></svg>'}</div>
    <div><span class="sq"></span></div>
    <div class="n" style="padding-left:1px">${on ? '<span class="dot"></span>' : ""}</div>
    <div class="l">${a("line")}</div>`;
  }
}
customElements.define("layer-row", LayerRow);

class RhLayers extends HTMLElement {
  connectedCallback() {
    this.attachShadow({ mode: "open" }).innerHTML = `<style>
      :host{display:flex;flex-direction:column;width:331px;height:822px;box-sizing:border-box;background:#f0f1f6;font-size:13px;color:#333}
      .title{height:26px;display:flex;align-items:center;padding:0 0 2px 3px;box-sizing:border-box;gap:6px;flex:none}
      .grip{flex:1;height:3px;border-top:1px solid #ccc;border-bottom:1px solid #ccc}
      .tabs{display:flex;height:27px;padding-left:1px;flex:none;border-bottom:1px solid #c9cad0;box-sizing:border-box}
      .tabs div{width:44px;display:flex;justify-content:center;align-items:center;box-sizing:border-box}
      .tabs .on{border:1px solid #c9cad0;border-bottom:none;background:#f4f5f8;height:28px}
      .dot{width:14px;height:14px;border-radius:50%;background:#cfd0d6;margin:5px 0 0 -4px;flex:none}
      .tb{height:37px;padding-left:4px;display:flex;align-items:center;flex:none;box-sizing:border-box;border-bottom:1px solid #c9cad0}
      .table{flex:1;background:#fff;margin-right:4px;min-height:0}
      .hd{display:grid;grid-template-columns:98px repeat(4,17px) 80px 1fr;height:25px;line-height:24px;background:#fff}
      .hd span{border-right:1px solid #e2e2e6;padding-left:6px;box-sizing:border-box;white-space:nowrap}
      .hd span:last-child{border:none}
      .bar{height:25px;flex:none;background:#f0f1f6;border-left:1px solid #ccc;display:flex;align-items:center;padding:0 5px;gap:5px;box-sizing:border-box;border-top:1px solid #ddd;border-bottom:1px solid #ccc;margin-bottom:5px}
      .thumb{width:225px;height:15px;background:#c9c9cc;margin-left:2px}
      .bar svg:last-child{margin-left:auto}
    </style>
    <div class="title"><span>图层</span><div class="grip"></div></div>
    <div class="tabs">
      <div><tool-icon name="wheel" size="20"></tool-icon></div>
      <div class="on"><tool-icon name="shield" size="22"></tool-icon></div>
      <div><tool-icon name="bomb" size="20"></tool-icon></div>
      <div><tool-icon name="brush" size="18"></tool-icon></div>
      <div><tool-icon name="folder" size="20"></tool-icon></div>
      <div><tool-icon name="tex" size="20"></tool-icon></div>
      <div><tool-icon name="sun" size="20"></tool-icon></div>
      <span class="dot"></span>
    </div>
    <div class="tb"><tool-strip size="20" px="22.7" py="24" icons="new copy redx triu trid tril filt+ page hammer+ help"></tool-strip></div>
    <div class="table">
      <div class="hd"><span>图层</span><span></span><span></span><span></span><span></span><span>材质</span><span>线型</span></div>
      <layer-row name="默认值" line="Continuo..." bold></layer-row>
      <layer-row name="A" line="Continuous"></layer-row>
      <layer-row name="B" line="Continuous"></layer-row>
      <layer-row name="C" line="Continuous"></layer-row>
      <layer-row name="D" line="Continuous"></layer-row>
      <layer-row name="E" line="Continuous" on></layer-row>
    </div>
    <div class="bar">
      <svg width="8" height="10" viewBox="0 0 8 10"><path d="M6 1L2 5L6 9" fill="none" stroke="#555" stroke-width="1.4"/></svg>
      <div class="thumb"></div>
      <svg width="8" height="10" viewBox="0 0 8 10"><path d="M2 1L6 5L2 9" fill="none" stroke="#555" stroke-width="1.4"/></svg>
    </div>`;
  }
}
customElements.define("rh-layers", RhLayers);

class OsnapItem extends HTMLElement {
  connectedCallback() {
    const state = this.getAttribute("state") || "on";
    const w = this.getAttribute("w");
    const mark = state === "on" ? '<path d="M2.5 6.5L5 9.5L10 3" fill="none" stroke="#333" stroke-width="1.2"/>' : state === "fill" ? '<rect x="2.5" y="2.5" width="8" height="8" fill="#5578b5"/>' : "";
    const line = state === "off" ? "#c8c8cc" : "#555";
    this.attachShadow({ mode: "open" }).innerHTML = `<style>
      :host{display:flex;align-items:center;gap:3px;width:${w}px;font-size:13px;color:#333;white-space:nowrap;flex:none}
      svg{flex:none}
    </style>
    <svg width="13" height="13" viewBox="0 0 13 13"><rect x=".5" y=".5" width="12" height="12" fill="#fff" stroke="${line}"/>${mark}</svg><slot></slot>`;
  }
}
customElements.define("osnap-item", OsnapItem);

class RhOsnap extends HTMLElement {
  connectedCallback() {
    this.attachShadow({ mode: "open" }).innerHTML = `<style>
      :host{display:flex;align-items:center;height:25px;background:#f0f1f6;padding:3px 0 0 9px;box-sizing:border-box;line-height:20px}
    </style><slot></slot>`;
  }
}
customElements.define("rh-osnap", RhOsnap);

class RhStatus extends HTMLElement {
  connectedCallback() {
    const cells = [[60, "工作平面"], [88, "x 66.291"], [88, "y -35.407"], [88, "z 0.000"], [88, "毫米"], [169, "默认值", 1], [61, "锁定格点"], [38, "正交"], [63, "平面模式"], [63, "物件锁点"], [62, "智慧轨迹"], [45, "操作轴"], [92, "记录建构历史"], [44, "过滤器"], [0, "距离上次保存的时间 (分钟): 62"]];
    this.attachShadow({ mode: "open" }).innerHTML = `<style>
      :host{display:flex;height:20px;background:#f0f1f6;border-top:1px solid #d5d6dc;font-size:13px;line-height:21px;color:#333;box-sizing:border-box;white-space:nowrap}
      span{display:flex;justify-content:center;align-items:center;box-sizing:border-box;border-right:1px solid #d5d6dc;flex:none;padding-top:1px}
      .lay{justify-content:flex-start;padding-left:3px}
      .lay i{width:14px;height:15px;background:#000;margin-right:3px}
      .end{border:none;padding-left:6px;flex:1;justify-content:flex-start}
    </style>` + cells.map(c => c[2] ? `<span class="lay" style="width:${c[0]}px"><i></i>${c[1]}</span>` : c[0] ? `<span style="width:${c[0]}px">${c[1]}</span>` : `<span class="end">${c[1]}</span>`).join("");
  }
}
customElements.define("rh-status", RhStatus);

class RhChapters extends HTMLElement {
  connectedCallback() {
    const items = [[226, "自定义工具栏"], [482, "创建实体"], [190, "阵列工具集"], [391, "隐藏  &amp;  锁定"], [187, "布尔运算"], [219, "图层管理"], [225, "对齐工具集"]];
    this.attachShadow({ mode: "open" }).innerHTML = `<style>
      :host{display:grid;grid-template-columns:${items.map(i => i[0] + "px").join(" ")};align-items:center;height:40px;border-top:3px solid #0c0a06;box-sizing:border-box;background:linear-gradient(90deg,#fdc70c 1350px,#fff 1350px);font:700 23.5px/29px "Noto Sans CJK SC",sans-serif;color:#0a0a0a}
      span{display:block;height:29px;text-align:center;border-right:3px solid #111;box-sizing:border-box;white-space:pre}
      span:last-child{border:none;padding-left:4px}
    </style>` + items.map(i => `<span>${i[1]}</span>`).join("");
  }
}
customElements.define("rh-chapters", RhChapters);

class ArchLogo extends HTMLElement {
  connectedCallback() {
    this.attachShadow({ mode: "open" }).innerHTML = `<style>
      :host{position:absolute;left:1784px;top:44px;width:96px;height:96px;display:block}
    </style>
    <svg width="96" height="96" viewBox="1784 44 96 96">
      <circle cx="1833" cy="94" r="43" fill="#6d6668"/>
      <circle cx="1830" cy="91" r="42.5" fill="#a81f3c"/>
      <path d="M1799 111L1848 61H1859V111Z" fill="#fff"/>
      <path d="M1850 83L1840 83C1835 85 1834 92 1838 96C1841 100 1838 104 1834 107L1833 111L1852 111C1851 106 1846 105 1847 99C1848 93 1844 92 1844 90C1844 88 1847 88 1850 88Z" fill="#a81f3c"/>
      <text x="1830" y="122" font-family="Liberation Serif" font-weight="700" font-size="11.5" fill="#fff" text-anchor="middle">Arch studio</text>
    </svg>`;
  }
}
customElements.define("arch-logo", ArchLogo);

class RhApp extends HTMLElement {
  connectedCallback() {
    this.attachShadow({ mode: "open" }).innerHTML = `<style>
      :host{display:flex;flex-direction:column;position:relative;width:1920px;height:1080px;overflow:hidden;background:#f0f1f6;font-family:"Noto Sans","Noto Sans CJK SC",sans-serif;filter:blur(.3px)}
      .work{display:flex;height:822px;flex:none}
      .left{width:65px;flex:none;background:linear-gradient(90deg,#eef0f7,#f4f5fa);padding-top:7px;box-sizing:border-box}
      .mid{width:1515px;flex:none}
      .gap{width:9px;flex:none;background:#f0f1f6}
      .caption{position:absolute;left:749px;top:981px;font:700 42px/60px "Noto Sans CJK SC",sans-serif;color:#fff;white-space:nowrap;
        text-shadow:3px 3px 0 #000,-1px -1px 0 #000,1px -1px 0 #000,-1px 1px 0 #000,2px 2px 2px #000}
    </style>
    <rh-titlebar></rh-titlebar>
    <rh-menubar></rh-menubar>
    <rh-command></rh-command>
    <rh-tabs></rh-tabs>
    <rh-toolbar></rh-toolbar>
    <div class="work">
      <div class="left">
        <tool-strip cols="2" px="29" py="28.1" icons="select point+ polyl+ curve+ circle+ ellipse+ arc+ rect+ poly+ fillet+ srfp+ srfe+ cube+ spheres+ meshc+ grid+ gold boom trim split group+ ungroup fc+ fc2+ textT scale+ arr4 rotc+ block+ planes+ grid9+ align+ mirror+ check+ solid+ pyro+"></tool-strip>
      </div>
      <div class="mid">
        <rh-viewport>
          <float-bar x="114" y="84" w="178" tab="109" icon="cube" label="建立实体" tgap="9">
            <tool-strip cols="6" icons="cube+ cyl sphc+ sphp ell+ para cone3 tcone pyr trunc tube torus pipe pipe2 ext ext2+ puzzle"></tool-strip>
          </float-bar>
          <float-bar x="316" y="87" w="175" tab="81" icon="grid9g" label="阵列" tgap="6" pad="1px 0 4px 0">
            <tool-strip cols="6" icons="grid9 arrc arrv arrb arrs arrd"></tool-strip>
          </float-bar>
          <float-bar x="113" y="220" w="175" tab="109" icon="spheres" label="实体工具" tgap="9" pad="2px 0 8px 0">
            <tool-strip cols="6" icons="b1 b2 b3 b4 c5 c6 s1 s2 s3 puzzle s5 cube s7 s8 s9 s10 s11 s12 s13 s14 s15 s16 s17 s18 s19 s20 s21 s22 s23 s24 puzzle cup"></tool-strip>
          </float-bar>
        </rh-viewport>
        <rh-viewtabs></rh-viewtabs>
      </div>
      <div class="gap"></div>
      <rh-layers></rh-layers>
    </div>
    <rh-osnap>
      <osnap-item w="49">端点</osnap-item><osnap-item w="63">最近点</osnap-item><osnap-item w="35">点</osnap-item><osnap-item w="49">中点</osnap-item><osnap-item w="62">中心点</osnap-item><osnap-item w="49">交点</osnap-item><osnap-item w="49">垂点</osnap-item><osnap-item w="49">切点</osnap-item><osnap-item w="62">四分点</osnap-item><osnap-item w="49">节点</osnap-item><osnap-item w="50">顶点</osnap-item><osnap-item w="62" state="fill">投影</osnap-item><osnap-item state="off">停用</osnap-item>
    </rh-osnap>
    <rh-status></rh-status>
    <rh-chapters></rh-chapters>
    <arch-logo></arch-logo>
    <div class="caption">减去了一个球体的部分</div>`;
  }
}
customElements.define("rh-app", RhApp);
</script>
</body>
</html>
